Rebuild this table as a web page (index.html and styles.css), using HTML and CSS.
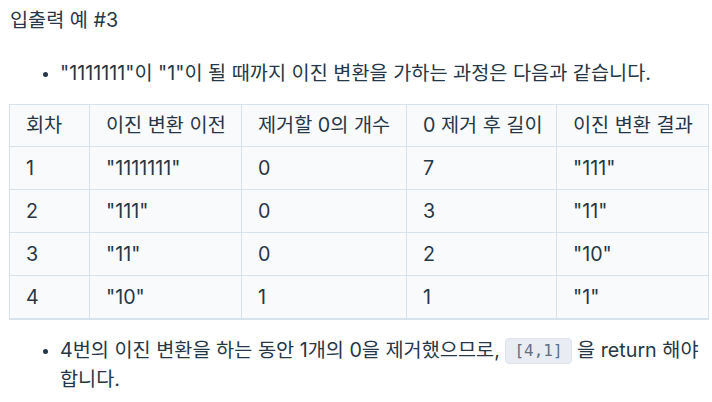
FILE: index.html
```html
<!DOCTYPE html>
<html lang="ko">
<head>
<meta charset="utf-8">
<link rel="stylesheet" href="styles.css">
</head>
<body>
<div class="doc">
  <h5 class="title">입출력 예 #3</h5>
  <ul class="list">
    <li>"1111111"이 "1"이 될 때까지 이진 변환을 가하는 과정은 다음과 같습니다.</li>
  </ul>
  <table class="tbl">
    <colgroup>
      <col class="c1"><col class="c2"><col class="c3"><col class="c4"><col class="c5">
    </colgroup>
    <thead>
      <tr><th>회차</th><th>이진 변환 이전</th><th>제거할 0의 개수</th><th>0 제거 후 길이</th><th>이진 변환 결과</th></tr>
    </thead>
    <tbody>
      <tr><td>1</td><td>"1111111"</td><td>0</td><td>7</td><td>"111"</td></tr>
      <tr><td>2</td><td>"111"</td><td>0</td><td>3</td><td>"11"</td></tr>
      <tr><td>3</td><td>"11"</td><td>0</td><td>2</td><td>"10"</td></tr>
      <tr><td>4</td><td>"10"</td><td>1</td><td>1</td><td>"1"</td></tr>
    </tbody>
  </table>
  <ul class="list list-last">
    <li>4번의 이진 변환을 하는 동안 1개의 0을 제거했으므로, <code class="code">[4,1]</code> 을 return 해야 합니다.</li>
  </ul>
</div>
</body>
</html>
```
FILE: styles.css
```css
html, body {
  margin: 0;
  padding: 0;
  background: #ffffff;
}
.doc {
  padding: 6px 4px 0 9px;
  font-family: Inter, "Noto Sans CJK KR", sans-serif;
  font-size: 19.7px;
  color: #263747;
}
.title {
  margin: 0 0 0 1px;
  font-size: 19.7px;
  font-weight: 400;
  line-height: 28px;
}
.list {
  margin: 25px 0 0 0;
  padding-left: 51px;
}
.list li {
  line-height: 29px;
}
.list li::marker {
  font-size: 15px;
}
.tbl {
  margin-top: 16px;
  width: 699px;
  border-collapse: collapse;
  table-layout: fixed;
  background: #f9fafc;
  border-bottom: 2px solid #d7e2eb;
}
.c1 { width: 80px; }
.c2 { width: 152px; }
.c3 { width: 165px; }
.c4 { width: 150px; }
.c5 { width: 152px; }
.tbl th, .tbl td {
  border: 1px solid #d7e2eb;
  text-align: left;
  font-weight: 400;
  padding: 9px 4px 9px 16px;
  height: 24px;
  line-height: 24px;
  white-space: nowrap;
}
.tbl th {
  padding-top: 8px;
  padding-bottom: 9px;
}
.list-last {
  margin-top: 16px;
}
.code {
  display: inline-block;
  font-family: "DejaVu Sans Mono", "Liberation Mono", monospace;
  font-size: 16px;
  line-height: 22px;
  color: #5f6f80;
  background: #e9ecf3;
  border: 1px solid #dfe3ec;
  border-radius: 4px;
  padding: 1px 8px;
  vertical-align: 1px;
}
```
